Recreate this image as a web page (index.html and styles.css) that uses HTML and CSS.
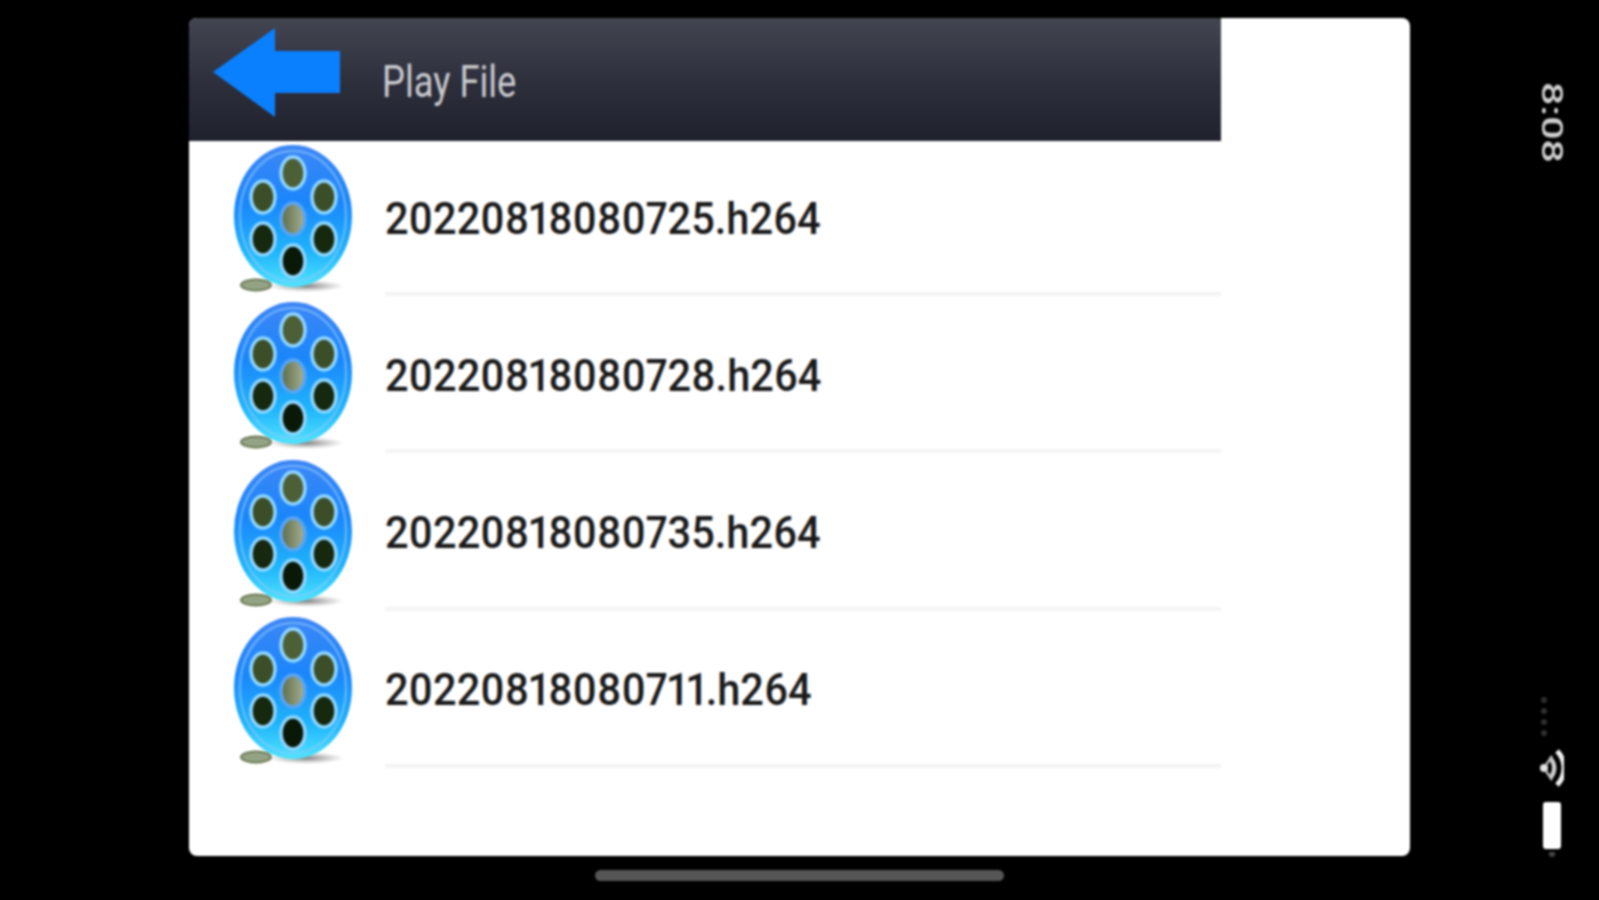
FILE: index.html
```html
<!DOCTYPE html>
<html lang="en">
<head>
    <meta charset="UTF-8">
    <title>Play File</title>
    <link rel="stylesheet" href="styles.css">
</head>
<body>
    <svg class="sprites" width="0" height="0">
        <defs>
            <linearGradient id="reelBody" x1="0" y1="0" x2="0" y2="1">
                <stop offset="0" stop-color="#3f86f5"/>
                <stop offset="0.4" stop-color="#1a86fb"/>
                <stop offset="0.75" stop-color="#1fb4fb"/>
                <stop offset="1" stop-color="#4fe4fd"/>
            </linearGradient>
            <linearGradient id="reelHub" x1="0" y1="0" x2="1" y2="0">
                <stop offset="0" stop-color="#5d6b48"/>
                <stop offset="1" stop-color="#a7b193"/>
            </linearGradient>
            <radialGradient id="reelShadow">
                <stop offset="0" stop-color="#555" stop-opacity="0.75"/>
                <stop offset="1" stop-color="#777" stop-opacity="0"/>
            </radialGradient>
            <symbol id="reel" viewBox="0 0 119 150">
                <ellipse cx="72" cy="141" rx="38" ry="6" fill="url(#reelShadow)"/>
                <ellipse cx="22" cy="140" rx="15" ry="5.5" fill="#94a384" stroke="#6b7b56" stroke-width="2"/>
                <ellipse cx="59" cy="71" rx="59" ry="71" fill="url(#reelBody)"/>
                <ellipse cx="59" cy="71" rx="53" ry="65" fill="none" stroke="#8ccbff" stroke-width="2.5" opacity="0.55"/>
                <g stroke="#8fd6ff" stroke-width="3.5">
                    <ellipse cx="59" cy="28" rx="12" ry="16" fill="#4d5f36"/>
                    <ellipse cx="29" cy="52" rx="12" ry="16" fill="#3c4e28"/>
                    <ellipse cx="90" cy="52" rx="12" ry="16" fill="#3c4e28"/>
                    <ellipse cx="59" cy="74" rx="12" ry="16" fill="url(#reelHub)" stroke="#5aa5f0"/>
                    <ellipse cx="29" cy="94" rx="12" ry="16" fill="#16290f"/>
                    <ellipse cx="90" cy="94" rx="12" ry="16" fill="#16290f"/>
                    <ellipse cx="59" cy="116" rx="12" ry="16" fill="#0a1807"/>
                </g>
            </symbol>
        </defs>
    </svg>

    <div class="screen">
        <div class="main">
            <div class="panel">
                <div class="topbar">
                    <svg class="back-arrow" viewBox="0 0 127 89">
                        <polygon points="0,44 62,0 62,23 127,23 127,65 62,65 62,89" fill="#0b80ff"/>
                    </svg>
                    <span class="topbar-title">Play File</span>
                </div>
                <ul class="file-list">
                    <li class="file-row">
                        <svg class="file-icon"><use href="#reel"/></svg>
                        <div class="file-name"><span>20220818080725.h264</span></div>
                    </li>
                    <li class="file-row">
                        <svg class="file-icon"><use href="#reel"/></svg>
                        <div class="file-name"><span>20220818080728.h264</span></div>
                    </li>
                    <li class="file-row">
                        <svg class="file-icon"><use href="#reel"/></svg>
                        <div class="file-name"><span>20220818080735.h264</span></div>
                    </li>
                    <li class="file-row">
                        <svg class="file-icon"><use href="#reel"/></svg>
                        <div class="file-name"><span>20220818080711.h264</span></div>
                    </li>
                </ul>
            </div>
            <div class="home-bar"></div>
        </div>

        <div class="status-bar">
            <div class="clock">8:08</div>
            <div class="status-icons">
                <div class="signal-dots">
                    <i></i><i></i><i></i><i></i>
                </div>
                <svg class="wifi" viewBox="0 0 24 40">
                    <circle cx="4" cy="20" r="4" fill="#e2e2e2"/>
                    <path d="M10 10 A14 14 0 0 1 10 30" fill="none" stroke="#cfcfcf" stroke-width="4.5"/>
                    <path d="M17 3 A24 24 0 0 1 17 37" fill="none" stroke="#f0f0f0" stroke-width="5"/>
                    <path d="M6 17 L12 8 M6 23 L12 32" stroke="#bbb" stroke-width="2.5"/>
                </svg>
                <div class="battery"></div>
                <div class="battery-cap"></div>
            </div>
        </div>
    </div>
</body>
</html>
```

FILE: styles.css
```css
* {
    margin: 0;
    padding: 0;
    box-sizing: border-box;
}

body {
    background: #000;
    width: 1599px;
    height: 900px;
    overflow: hidden;
    font-family: Roboto, "Liberation Sans", sans-serif;
}

.sprites {
    position: absolute;
}

.screen {
    display: flex;
    height: 900px;
    padding: 18px 0 0 189px;
    filter: blur(1px);
}

.main {
    width: 1221px;
    display: flex;
    flex-direction: column;
    align-items: center;
}

.panel {
    width: 100%;
    height: 838px;
    background: #fff;
    border-radius: 8px;
    overflow: hidden;
}

.topbar {
    width: 1032px;
    height: 123px;
    padding: 10px 0 0 24px;
    display: flex;
    align-items: flex-start;
    background: linear-gradient(180deg, #434551 0%, #2c2e3b 55%, #1f212d 100%);
}

.back-arrow {
    width: 127px;
    height: 89px;
    flex: none;
}

.topbar-title {
    margin: 26px 0 0 42px;
    display: inline-block;
    font-size: 44px;
    line-height: 56px;
    color: #c9cace;
    transform: scaleX(0.825);
    transform-origin: left center;
}

.file-list {
    list-style: none;
    width: 1032px;
}

.file-row {
    display: flex;
    height: 157.25px;
    padding-left: 45px;
}

.file-icon {
    width: 119px;
    height: 150px;
    margin-top: 4px;
    flex: none;
}

.file-name {
    flex: 1;
    height: 155px;
    margin-left: 32px;
    padding-top: 4px;
    display: flex;
    align-items: center;
    border-bottom: 4px solid #f4f4f4;
    font-size: 44px;
    font-weight: 500;
    font-variant-numeric: proportional-nums;
    color: #1a1a1a;
}

.file-name span {
    display: inline-block;
    white-space: nowrap;
    transform: scaleX(0.944);
    transform-origin: left center;
}

.home-bar {
    width: 409px;
    height: 11px;
    margin-top: 14px;
    background: #555;
    border-radius: 6px;
}

.status-bar {
    width: 24px;
    margin-left: 130px;
    height: 839px;
    padding-top: 64px;
    display: flex;
    flex-direction: column;
    justify-content: space-between;
    align-items: center;
    color: #cfcfcf;
}

.clock {
    writing-mode: vertical-rl;
    font-size: 30px;
    line-height: 24px;
    font-weight: 500;
    transform: scaleY(1.37);
    transform-origin: center top;
}

.status-icons {
    display: flex;
    flex-direction: column;
    align-items: center;
}

.signal-dots {
    display: flex;
    flex-direction: column;
    gap: 5px;
    margin-bottom: 12px;
    align-self: flex-start;
    margin-left: 1px;
}

.signal-dots i {
    display: block;
    width: 6px;
    height: 6px;
    background: #2e2e2e;
    border-radius: 50%;
}

.wifi {
    width: 24px;
    height: 40px;
    margin-bottom: 14px;
}

.battery {
    width: 18px;
    height: 47px;
    margin-right: 1px;
    background: #fff;
    border-radius: 3px;
}

.battery-cap {
    width: 6px;
    height: 5px;
    margin-top: 3px;
    background: #444;
    border-radius: 0 0 3px 3px;
}
```
